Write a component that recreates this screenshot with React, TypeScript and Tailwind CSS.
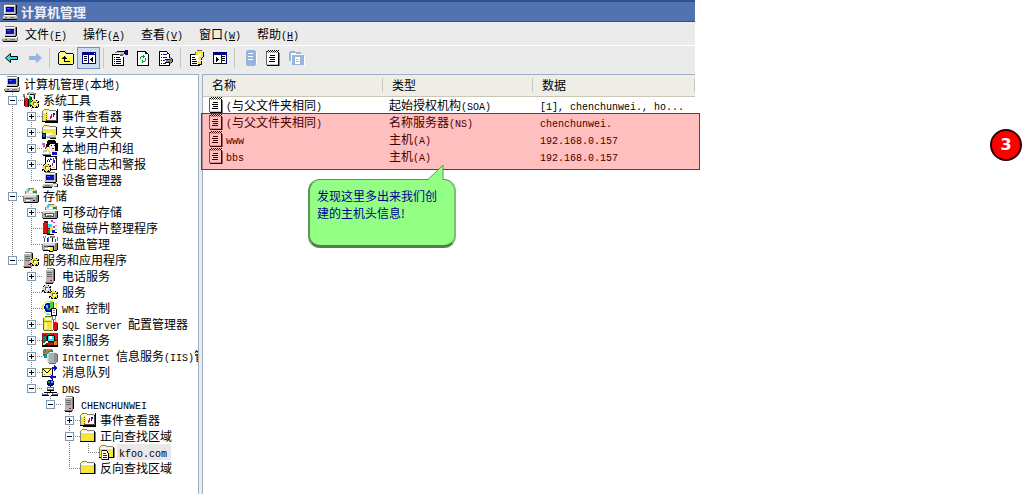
import type { ReactNode } from 'react';

const K = '#000000';
const G = '#808080';
const L = '#c6c6c6';
const W = '#ffffff';
const Y = '#f4e63c';
const N = '#000084';
const B = '#1010c8';
const S = '#96b4dc';
const T = '#008080';
const C = '#22e6e6';
const R = '#e01010';
const E = '#00a020';

// x, y, width, height, fill on a 16x16 grid
type Px = [number, number, number, number, string];

const folder: Px[] = [
  [2, 1, 5, 1, G], [1, 2, 1, 1, G], [2, 2, 5, 1, '#ffffa0'], [0, 3, 1, 10, G], [1, 3, 13, 10, '#ffffa0'],
  [7, 2, 7, 1, G], [1, 5, 13, 8, Y], [1, 4, 13, 1, W], [14, 3, 1, 11, K], [0, 13, 15, 1, K], [15, 4, 1, 10, G],
];

const computer: Px[] = [
  [3, 0, 10, 1, G], [2, 1, 12, 9, L], [2, 1, 11, 1, W], [2, 1, 1, 8, W], [13, 1, 1, 9, G], [14, 1, 1, 9, K], [3, 10, 11, 1, K],
  [4, 3, 8, 5, B], [4, 3, 8, 1, N], [4, 3, 1, 5, N], [5, 4, 3, 1, '#4060ff'],
  [2, 11, 12, 1, W], [1, 12, 14, 2, L], [0, 13, 1, 2, G], [1, 14, 14, 1, '#a0a0a0'], [15, 11, 1, 4, G], [1, 15, 14, 1, K],
  [3, 13, 2, 1, E], [8, 13, 5, 1, G],
];

const server: Px[] = [
  [5, 0, 7, 1, G], [4, 1, 8, 1, W], [3, 2, 8, 12, '#b4b4b4'], [3, 2, 1, 12, W], [11, 1, 1, 13, G], [12, 1, 1, 12, K],
  [5, 4, 5, 1, '#686868'], [5, 6, 5, 1, '#686868'], [5, 8, 5, 1, '#686868'], [8, 12, 2, 1, R], [3, 14, 9, 1, G], [4, 15, 7, 1, K],
];

const note: Px[] = [
  [1, 2, 11, 13, W], [0, 1, 1, 14, '#606060'], [12, 2, 1, 13, K], [13, 3, 1, 13, G], [1, 15, 12, 1, K], [1, 14, 11, 1, L],
  [2, 0, 1, 1, K], [4, 0, 1, 1, K], [6, 0, 1, 1, K], [8, 0, 1, 1, K], [10, 0, 1, 1, K], [12, 0, 1, 1, K],
  [1, 1, 1, 1, K], [3, 1, 1, 1, K], [5, 1, 1, 1, K], [7, 1, 1, 1, K], [9, 1, 1, 1, K], [11, 1, 1, 1, K],
  [2, 2, 1, 1, G], [4, 2, 1, 1, G], [6, 2, 1, 1, G], [8, 2, 1, 1, G], [10, 2, 1, 1, G],
  [4, 5, 5, 1, K], [3, 7, 6, 1, K], [4, 9, 5, 1, K], [3, 11, 6, 1, K],
];

const gear = (x: number, y: number, c: string): Px[] => [
  [x + 2, y + 8, 2, 1, K], [x + 5, y + 8, 3, 1, K], [x + 8, y + 2, 1, 2, K], [x + 8, y + 5, 1, 3, K], [x, y + 6, 1, 2, K],
  [x + 1, y + 1, 7, 7, c], [x + 4, y, 1, 1, c], [x, y + 4, 1, 1, c], [x + 8, y + 4, 1, 1, c], [x + 4, y + 8, 1, 1, c],
  [x + 2, y + 1, 1, 1, K], [x + 6, y + 1, 1, 1, K], [x + 1, y + 2, 1, 1, K], [x + 7, y + 3, 1, 1, K],
  [x + 1, y + 6, 1, 1, K], [x + 2, y + 7, 1, 1, K], [x + 6, y + 7, 1, 1, K],
  [x + 3, y + 3, 3, 1, '#706810'], [x + 3, y + 4, 1, 2, '#706810'], [x + 4, y + 4, 2, 2, W],
];

const drive: Px[] = [
  [3, 6, 11, 1, W], [1, 7, 12, 2, '#d8d8d8'], [0, 8, 1, 6, G], [1, 9, 13, 5, '#b0b0b0'], [13, 7, 2, 7, G], [15, 7, 1, 7, K],
  [1, 14, 14, 1, K], [2, 10, 8, 1, '#505050'], [3, 12, 4, 1, W], [10, 12, 2, 1, K],
];

const disc: Px[] = [
  [5, 0, 6, 1, G], [3, 1, 10, 5, '#d8d8d8'], [4, 1, 3, 3, C], [8, 1, 3, 2, Y], [6, 3, 3, 2, W], [10, 3, 3, 2, E], [2, 3, 1, 3, G], [13, 2, 1, 4, G],
];

const panel: Px[] = [
  [1, 2, 14, 12, N], [2, 5, 12, 8, W], [7, 5, 1, 8, N], [13, 3, 1, 1, W],
];

const icons: Record<string, Px[]> = {
  computer,
  folder,
  server,
  note,
  tools: [
    [5, 0, 6, 2, '#c0c0c0'], [4, 1, 2, 2, G], [6, 2, 6, 1, K], [11, 1, 2, 2, G], [0, 2, 2, 3, G], [1, 4, 1, 4, '#505050'],
    [2, 6, 3, 9, R], [5, 7, 1, 8, K], [1, 8, 1, 6, '#600000'], [3, 4, 1, 2, L], [6, 4, 2, 10, E], [6, 2, 1, 2, L], [8, 5, 1, 9, K], [10, 3, 1, 4, L], [11, 3, 1, 4, K],
    ...gear(7, 7, Y),
  ],
  events: [
    ...folder, [4, 4, 11, 9, '#505050'], [5, 4, 9, 8, W], [4, 4, 2, 1, Y], [4, 6, 2, 1, Y], [4, 8, 2, 1, Y], [4, 10, 2, 1, Y],
    [8, 8, 1, 3, R], [9, 6, 1, 4, R], [11, 5, 1, 4, B], [12, 5, 1, 2, B], [15, 1, 1, 14, K], [3, 14, 13, 1, K],
  ],
  share: [
    ...folder.slice(0, 8), [14, 3, 1, 8, K], [0, 9, 4, 5, N], [1, 10, 2, 3, T], [4, 9, 6, 3, W], [4, 12, 5, 1, L], [7, 11, 7, 2, L],
    [0, 14, 4, 1, K], [5, 13, 9, 1, G], [8, 14, 6, 1, K],
  ],
  users: [
    [5, 1, 9, 3, K], [6, 0, 7, 1, K], [4, 4, 4, 3, K], [8, 4, 5, 6, '#f6f2ee'], [7, 5, 1, 4, '#d8d0cc'], [13, 3, 3, 8, K], [9, 5, 1, 1, K], [12, 5, 1, 1, K],
    [9, 10, 3, 2, '#e8e0dc'], [10, 8, 2, 1, R], [0, 3, 3, 2, '#c060c0'], [1, 5, 2, 2, '#e040a0'], [3, 7, 2, 2, '#806010'], [4, 8, 2, 2, Y], [6, 10, 2, 2, Y], [7, 12, 2, 2, Y],
    [1, 10, 4, 3, L], [2, 12, 5, 2, W], [10, 12, 5, 3, B], [0, 14, 9, 1, G], [1, 15, 8, 1, K],
  ],
  perf: [
    [3, 0, 12, 1, K], [3, 0, 1, 9, K], [14, 0, 1, 14, K], [9, 13, 6, 1, K], [4, 1, 10, 12, W],
    [5, 4, 1, 2, B], [6, 3, 1, 1, B], [7, 4, 1, 2, B], [8, 2, 1, 2, B], [9, 3, 1, 1, B], [10, 7, 1, 3, R], [11, 2, 1, 5, R], [12, 4, 1, 3, B], [13, 1, 1, 2, R],
    ...gear(0, 7, Y), [10, 11, 3, 1, L],
  ],
  devices: [
    ...computer.slice(0, 11), [2, 11, 8, 1, W], [1, 12, 10, 2, L], [3, 13, 5, 1, G], [0, 14, 11, 1, G], [1, 15, 9, 1, K],
    [11, 11, 4, 1, G], [11, 12, 5, 2, '#e8e8e8'], [12, 14, 3, 1, G], [15, 12, 1, 3, K],
  ],
  storage: [...disc, ...drive],
  removable: [...disc.map(([x, y, w, h, c]): Px => [x + 1, y, w, h, c]), ...drive, [3, 9, 9, 4, '#505050'], [4, 10, 7, 2, W], [5, 11, 5, 1, G]],
  defrag: [
    [2, 1, 4, 2, '#800000'], [1, 3, 5, 10, R], [5, 4, 3, 10, '#a00050'], [6, 4, 4, 4, C], [8, 7, 3, 5, Y], [10, 10, 3, 3, B], [6, 9, 2, 4, E],
    [9, 0, 2, 2, '#e020e0'], [11, 2, 2, 1, '#e020e0'], [13, 5, 2, 1, C], [11, 6, 2, 2, '#e020e0'], [13, 9, 2, 1, C], [13, 12, 2, 1, K],
    [1, 13, 5, 1, '#600000'], [5, 14, 7, 1, K],
  ],
  diskmgmt: [
    [1, 0, 1, 2, G], [3, 0, 1, 2, G], [2, 2, 1, 4, '#505050'], [5, 2, 1, 4, B], [6, 1, 1, 5, '#6060ff'], [8, 0, 5, 2, G], [10, 2, 1, 5, K], [13, 3, 1, 4, R],
    [15, 1, 1, 4, G], ...drive, [6, 10, 6, 1, K], [6, 11, 5, 3, W], [8, 11, 3, 4, Y], [7, 15, 4, 1, K], [11, 11, 1, 4, K],
  ],
  services: [...gear(0, 0, '#d8d8d8'), ...gear(7, 6, Y)],
  apps: [...server.map(([x, y, w, h, c]): Px => [x - 3, y, w, h, c]), ...gear(7, 5, Y)],
  wmi: [
    [2, 2, 2, 1, Y], [4, 1, 4, 1, Y], [0, 5, 1, 5, Y], [1, 4, 1, 2, Y], [2, 11, 2, 2, Y], [4, 13, 3, 1, Y], [13, 3, 2, 2, Y], [14, 5, 1, 3, Y],
    [4, 3, 5, 1, B], [3, 4, 6, 7, B], [4, 5, 2, 3, C], [5, 8, 3, 2, E], [2, 6, 1, 3, N], [4, 11, 5, 1, N],
    [8, 1, 3, 8, '#40d820'], [9, 0, 2, 2, '#a0ff40'], [11, 2, 1, 6, '#006010'], [9, 8, 5, 1, K], [9, 8, 1, 8, K], [14, 9, 1, 7, K], [9, 15, 6, 1, K],
    [10, 9, 4, 6, W], [11, 10, 2, 1, G], [11, 12, 2, 1, G], [4, 14, 4, 1, C],
  ],
  sql: [
    [3, 0, 7, 1, '#706810'], [2, 1, 9, 13, Y], [1, 2, 1, 12, '#706810'], [3, 2, 6, 2, '#ffffc8'], [2, 5, 9, 1, '#a09820'], [3, 7, 2, 6, '#ffffb0'], [2, 14, 9, 1, '#706810'],
    [10, 0, 1, 3, G], [13, 0, 1, 3, G], [10, 3, 3, 1, G], [10, 4, 1, 10, W], [11, 4, 1, 10, '#505050'], [12, 6, 3, 8, R], [13, 3, 1, 3, L], [15, 7, 1, 7, '#600000'], [12, 14, 3, 1, K],
  ],
  index: [
    [0, 1, 16, 14, '#6a2018'], [0, 1, 16, 2, R], [5, 1, 2, 2, E], [1, 4, 3, 8, T], [11, 3, 4, 5, '#c83018'], [12, 9, 3, 4, '#e08018'], [0, 13, 16, 2, K], [6, 11, 5, 2, R],
    [6, 3, 6, 1, K], [5, 4, 8, 5, K], [6, 9, 6, 1, K], [6, 4, 6, 5, C], [7, 4, 3, 3, W], [4, 9, 2, 2, W], [3, 10, 1, 2, W], [1, 11, 2, 2, Y],
  ],
  iis: [
    [2, 1, 8, 7, '#109090'], [1, 2, 10, 6, '#109090'], [4, 1, 5, 2, '#d08030'], [2, 3, 4, 3, '#b07840'], [2, 8, 3, 2, '#109090'],
    [7, 4, 7, 1, '#e8ecee'], [6, 5, 9, 10, '#a8b0b4'], [5, 6, 1, 8, '#d8dcde'], [6, 5, 1, 9, '#c8ced0'], [12, 5, 3, 9, '#8c9498'], [15, 6, 1, 8, '#606a6e'], [7, 15, 7, 1, '#606060'],
  ],
  queue: [
    [0, 4, 11, 1, '#706810'], [0, 4, 1, 9, '#706810'], [0, 12, 11, 1, K], [10, 5, 1, 7, K], [1, 5, 9, 7, '#ffff90'],
    [1, 5, 1, 1, K], [2, 6, 1, 1, K], [3, 7, 1, 1, K], [4, 8, 2, 1, K], [6, 7, 1, 1, K], [7, 6, 1, 1, K], [8, 5, 1, 1, K], [2, 10, 1, 1, G], [8, 10, 1, 1, G],
    [10, 3, 3, 2, B], [12, 1, 1, 6, B], [13, 2, 1, 4, B], [14, 3, 1, 2, B], [11, 12, 3, 2, B], [10, 10, 1, 6, B], [9, 11, 1, 4, B], [8, 12, 1, 2, B],
  ],
  dns: [
    [6, 0, 5, 6, N], [5, 1, 7, 4, N], [6, 1, 2, 2, E], [9, 1, 2, 2, '#80a0ff'], [7, 3, 3, 2, B],
    [8, 6, 1, 2, K], [5, 7, 7, 3, '#6068a0'], [6, 8, 5, 1, W], [5, 10, 7, 1, K], [8, 11, 1, 1, K], [2, 12, 13, 1, K],
    [0, 13, 6, 2, '#6068a0'], [0, 15, 7, 1, K], [10, 13, 6, 2, '#6068a0'], [9, 15, 7, 1, K], [1, 13, 4, 1, W], [11, 13, 4, 1, W],
  ],
  zone: [
    ...folder, [2, 6, 6, 1, K], [2, 6, 1, 10, G], [3, 7, 5, 8, W], [8, 7, 1, 2, K], [8, 9, 1, 6, W], [4, 9, 3, 1, B], [4, 11, 4, 1, B], [4, 13, 4, 1, B], [9, 9, 1, 7, K], [3, 15, 7, 1, K],
  ],
  up: [
    [2, 1, 5, 1, K], [1, 2, 1, 1, K], [7, 2, 1, 1, K], [8, 3, 7, 1, K], [0, 3, 1, 11, K], [15, 4, 1, 10, K], [1, 14, 14, 1, K], [2, 2, 5, 1, '#ffff60'],
    [1, 3, 7, 1, '#ffff60'], [1, 4, 14, 10, '#ffff60'], [1, 4, 14, 1, '#ffffd0'],
    [6, 6, 1, 5, K], [5, 7, 3, 1, K], [4, 8, 5, 1, K], [6, 11, 6, 1, K],
  ],
  tree: [...panel, [3, 6, 3, 1, K], [3, 8, 3, 1, K], [3, 10, 3, 1, K], [9, 9, 1, 1, K], [10, 8, 1, 3, K], [11, 7, 1, 5, K]],
  pane: [...panel.slice(0, 2), [9, 5, 1, 8, N], [10, 6, 3, 1, K], [10, 8, 3, 1, K], [10, 10, 3, 1, K], [4, 7, 1, 5, K], [5, 8, 1, 3, K], [6, 9, 1, 1, K]],
  props: [
    [0, 4, 11, 1, K], [0, 4, 1, 11, K], [11, 7, 1, 8, K], [0, 15, 12, 1, K], [1, 5, 10, 10, W], [2, 7, 1, 1, K], [4, 7, 4, 1, K], [2, 9, 1, 1, K], [4, 9, 5, 1, K], [2, 11, 1, 1, K], [4, 11, 5, 1, K], [2, 13, 1, 1, K], [4, 13, 5, 1, K],
    [3, 2, 4, 1, G], [5, 1, 8, 1, K], [5, 2, 8, 2, L], [4, 3, 4, 1, W], [7, 4, 5, 1, G], [8, 5, 3, 1, '#505050'], [13, 0, 3, 5, N], [12, 1, 1, 3, K],
  ],
  refresh: [
    [2, 1, 9, 1, K], [2, 1, 1, 14, K], [2, 15, 12, 1, K], [13, 4, 1, 12, K], [3, 2, 10, 13, W], [10, 2, 1, 2, K], [11, 2, 1, 1, K], [11, 3, 2, 1, K],
    [6, 6, 4, 1, E], [5, 7, 1, 2, E], [8, 5, 1, 3, E], [7, 11, 3, 1, E], [10, 8, 1, 3, E], [7, 10, 1, 3, E],
  ],
  exportList: [
    [1, 1, 8, 1, K], [1, 1, 1, 14, K], [1, 15, 11, 1, K], [11, 4, 1, 4, K], [11, 13, 1, 3, K], [2, 2, 9, 13, W], [9, 2, 1, 2, K], [10, 3, 1, 1, K],
    [3, 4, 1, 1, K], [5, 4, 4, 1, B], [3, 7, 1, 1, K], [5, 7, 4, 1, B], [3, 10, 1, 1, K], [5, 10, 2, 1, B], [3, 13, 1, 1, K], [5, 13, 3, 1, B],
    [7, 9, 5, 1, K], [7, 12, 5, 1, K], [8, 10, 5, 2, G], [11, 6, 1, 2, K], [12, 7, 1, 7, G], [13, 8, 1, 5, G], [13, 8, 1, 1, K], [13, 12, 1, 1, K], [14, 9, 1, 3, K],
  ],
  help: [
    [1, 4, 6, 1, K], [1, 4, 1, 11, K], [1, 15, 10, 1, K], [10, 12, 1, 4, K], [2, 5, 8, 10, W], [3, 7, 3, 1, K], [3, 9, 4, 1, K], [3, 11, 5, 1, K], [3, 13, 5, 1, K],
    [8, 0, 5, 1, '#706810'], [7, 1, 7, 2, Y], [6, 2, 1, 3, '#706810'], [7, 3, 2, 2, Y], [12, 2, 2, 4, Y], [14, 2, 1, 5, K], [10, 6, 3, 2, Y], [9, 8, 3, 2, Y], [12, 8, 1, 2, K], [13, 7, 1, 1, K], [9, 11, 3, 3, Y], [12, 11, 1, 4, K], [9, 14, 3, 1, K],
  ],
  serverOff: [[4, 0, 8, 1, S], [3, 1, 10, 14, S], [4, 15, 8, 1, S], [5, 3, 5, 1, W], [5, 6, 5, 1, W], [5, 9, 5, 1, W], [13, 2, 1, 13, W]],
  foldersOff: [[1, 1, 5, 1, S], [0, 2, 12, 9, S], [2, 3, 5, 1, W], [3, 5, 12, 10, S], [2, 4, 1, 8, W], [3, 4, 10, 1, W], [6, 7, 5, 7, W], [7, 9, 2, 1, S], [7, 11, 3, 1, S], [15, 6, 1, 10, W]],
};

function Icon({ name }: { name: string }) {
  return (
    <svg width="16" height="16" viewBox="0 0 16 16" shapeRendering="crispEdges" className="shrink-0" aria-hidden="true">
      {icons[name].map(([x, y, w, h, fill], i) => (
        <rect key={i} x={x} y={y} width={w} height={h} fill={fill} />
      ))}
    </svg>
  );
}

function Arrow({ fill, stroke, flip }: { fill: string; stroke: string; flip?: boolean }) {
  return (
    <svg width="16" height="16" viewBox="0 0 16 16" className={flip ? 'rotate-180' : ''} aria-hidden="true">
      <path d="M1.5 8 6.5 3.5V6.5H13.5V9.5H6.5V12.5Z" fill={fill} stroke={stroke} />
    </svg>
  );
}

// Latin runs are half the width of a Chinese character
function Label({ children }: { children: string }) {
  return (
    <>
      {children.split(/([\x20-\x7e]+)/).filter(Boolean).map((part, i) =>
        /^[\x20-\x7e]/.test(part) ? (
          <span key={i} className="font-['Liberation_Mono',monospace] text-[10px] leading-none">{part}</span>
        ) : (
          part
        ),
      )}
    </>
  );
}

const menus = [
  ['文件', 'F'],
  ['操作', 'A'],
  ['查看', 'V'],
  ['窗口', 'W'],
  ['帮助', 'H'],
];

const toolbar: { label: string; icon: ReactNode; active?: boolean }[][] = [
  [
    { label: '后退', icon: <Arrow fill={C} stroke={K} /> },
    { label: '前进', icon: <Arrow fill={S} stroke={S} flip /> },
  ],
  [
    { label: '上一级', icon: <Icon name="up" /> },
    { label: '显示/隐藏控制台树', icon: <Icon name="tree" />, active: true },
  ],
  [
    { label: '属性', icon: <Icon name="props" /> },
    { label: '刷新', icon: <Icon name="refresh" /> },
    { label: '导出列表', icon: <Icon name="exportList" /> },
  ],
  [
    { label: '帮助', icon: <Icon name="help" /> },
    { label: '显示/隐藏窗格', icon: <Icon name="pane" /> },
  ],
  [
    { label: '新建服务器', icon: <Icon name="serverOff" /> },
    { label: '新建记录', icon: <Icon name="note" /> },
    { label: '新建区域', icon: <Icon name="foldersOff" /> },
  ],
];

// guides, one letter per level: | passes through, T branches, L ends, _ is empty
const tree: { guides: string; box?: '+' | '-'; icon: string; text: string; selected?: boolean }[] = [
  { guides: '', icon: 'computer', text: '计算机管理(本地)' },
  { guides: 'T', box: '-', icon: 'tools', text: '系统工具' },
  { guides: '|T', box: '+', icon: 'events', text: '事件查看器' },
  { guides: '|T', box: '+', icon: 'share', text: '共享文件夹' },
  { guides: '|T', box: '+', icon: 'users', text: '本地用户和组' },
  { guides: '|T', box: '+', icon: 'perf', text: '性能日志和警报' },
  { guides: '|L', icon: 'devices', text: '设备管理器' },
  { guides: 'T', box: '-', icon: 'storage', text: '存储' },
  { guides: '|T', box: '+', icon: 'removable', text: '可移动存储' },
  { guides: '|T', icon: 'defrag', text: '磁盘碎片整理程序' },
  { guides: '|L', icon: 'diskmgmt', text: '磁盘管理' },
  { guides: 'L', box: '-', icon: 'apps', text: '服务和应用程序' },
  { guides: '_T', box: '+', icon: 'server', text: '电话服务' },
  { guides: '_T', icon: 'services', text: '服务' },
  { guides: '_T', icon: 'wmi', text: 'WMI 控制' },
  { guides: '_T', box: '+', icon: 'sql', text: 'SQL Server 配置管理器' },
  { guides: '_T', box: '+', icon: 'index', text: '索引服务' },
  { guides: '_T', box: '+', icon: 'iis', text: 'Internet 信息服务(IIS)管理器' },
  { guides: '_T', box: '+', icon: 'queue', text: '消息队列' },
  { guides: '_L', box: '-', icon: 'dns', text: 'DNS' },
  { guides: '__L', box: '-', icon: 'server', text: 'CHENCHUNWEI' },
  { guides: '___T', box: '+', icon: 'events', text: '事件查看器' },
  { guides: '___T', box: '-', icon: 'folder', text: '正向查找区域' },
  { guides: '___|L', icon: 'zone', text: 'kfoo.com', selected: true },
  { guides: '___L', icon: 'folder', text: '反向查找区域' },
];

function Guide({ kind, box }: { kind: string; box?: string }) {
  return (
    <svg width="19" height="16" viewBox="0 0 19 16" shapeRendering="crispEdges" className="shrink-0" aria-hidden="true">
      {kind !== '_' && (
        <path d={kind === 'L' ? 'M8.5 0V8' : 'M8.5 0V16'} stroke="#808080" strokeDasharray="1 1" />
      )}
      {(kind === 'T' || kind === 'L') && <path d="M8 8.5H19" stroke="#808080" strokeDasharray="1 1" />}
      {box && (
        <>
          <rect x="4.5" y="4.5" width="8" height="8" fill="#ffffff" stroke="#7b98b5" />
          <path d={box === '+' ? 'M6 8.5H11M8.5 6V11' : 'M6 8.5H11'} stroke="#000000" />
        </>
      )}
    </svg>
  );
}

const records = [
  ['(与父文件夹相同)', '起始授权机构(SOA)', '[1], chenchunwei., ho...'],
  ['(与父文件夹相同)', '名称服务器(NS)', 'chenchunwei.'],
  ['www', '主机(A)', '192.168.0.157'],
  ['bbs', '主机(A)', '192.168.0.157'],
];

function Tree() {
  return (
    <nav className="w-[199px] shrink-0 overflow-hidden border-t border-r border-[#9db0c4] bg-white pt-px">
      <ul>
        {tree.map((node, i) => (
          <li key={i} className="flex h-4 items-center pl-1">
            {[...node.guides].map((kind, level) => (
              <Guide key={level} kind={kind} box={level === node.guides.length - 1 ? node.box : undefined} />
            ))}
            <Icon name={node.icon} />
            <span className={`ml-0.5 pr-1 pl-0.5 leading-4 ${node.selected ? 'bg-[#e8e8e8]' : ''}`}>
              <Label>{node.text}</Label>
            </span>
          </li>
        ))}
      </ul>
    </nav>
  );
}

function Records() {
  return (
    <section className="relative flex-1 border-t border-l border-[#9db0c4] bg-white">
      <table className="w-full table-fixed border-collapse text-left">
        <colgroup>
          <col className="w-[180px]" />
          <col className="w-[150px]" />
          <col />
        </colgroup>
        <thead>
          <tr className="h-[21px] border-b border-[#cbc7b8] bg-[#eeeee6]">
            {['名称', '类型', '数据'].map((title) => (
              <th key={title} className="p-0 font-normal">
                <div className="border-r border-[#c9c7ba] pl-[9px] leading-[14px]">{title}</div>
              </th>
            ))}
          </tr>
        </thead>
        <tbody>
          {records.map(([name, type, data], i) => (
            <tr key={i} className="h-[17px] leading-[16px]">
              <td className="p-0 pl-[6px]">
                <div className="flex h-4 items-center">
                  <Icon name="note" />
                  <span className="pl-px"><Label>{name}</Label></span>
                </div>
              </td>
              <td className="p-0 pl-[6px]"><Label>{type}</Label></td>
              <td className="p-0 pl-[7px]"><Label>{data}</Label></td>
            </tr>
          ))}
        </tbody>
      </table>

      {/* Highlighted records */}
      <div className="absolute top-[38px] -right-[5px] -left-[2px] h-[57px] border border-[#f00000] bg-[#ff0000]/25" />

      {/* Callout */}
      <div className="absolute top-[104px] left-[105px] w-[148px]">
        <p className="h-[69px] rounded-xl border-t border-r-2 border-b-3 border-l-2 border-t-[#5f8f5a] border-r-[#7cc072] border-b-[#52804c] border-l-[#5f9558] bg-[#93ff84] px-[7px] pt-[7px] leading-[17px] break-all whitespace-normal text-[#000090]">
          发现这里多出来我们创建的主机头信息!
        </p>
        <svg width="20" height="17" viewBox="0 0 20 17" className="absolute -top-[15px] left-[118px]" aria-hidden="true">
          <path d="M2 16 17 1V16" fill="#93ff84" />
          <path d="M1 15.5H2L17 1V15.5H19" fill="none" stroke="#5f8f5a" />
          <path d="M3 15.5H16" stroke="#93ff84" strokeWidth="2" />
        </svg>
      </div>
    </section>
  );
}

export default function App() {
  return (
    <main className="flex min-h-screen bg-white font-['Noto_Sans_CJK_SC',sans-serif] text-xs whitespace-nowrap text-black">
      <div className="flex min-w-0 flex-1 flex-col bg-[#ebebeb]">
        <header className="flex h-[22px] items-center gap-[3px] border-t-2 border-b border-t-[#2d4f95] border-b-[#2d4f95] bg-[#5372b0] pl-0.5">
          <Icon name="computer" />
          <h1 className="text-[13px] font-bold text-[#eceff6]">计算机管理</h1>
        </header>

        <div className="flex h-[24px] items-center border-b border-white pl-0.5">
          <Icon name="computer" />
          {menus.map(([title, key]) => (
            <button key={key} type="button" className="w-[58px] pl-[7px] text-left">
              {title}
              <span className="font-['Liberation_Mono',monospace] text-[10px] leading-none">(<u>{key}</u>)</span>
            </button>
          ))}
        </div>

        <div className="flex h-[28px] items-center pb-1">
          {toolbar.map((group, i) => (
            <div key={i} className="flex items-center">
              {i > 0 && <div className="mr-1 ml-[3px] h-5 w-px bg-[#c8c6b8]" />}
              {group.map((item) => (
                <button
                  key={item.label}
                  type="button"
                  aria-label={item.label}
                  className={`flex h-[22px] w-[23px] items-center justify-center ${item.active ? 'border border-[#6f93c8] bg-[#ced9ec]' : ''}`}
                >
                  {item.icon}
                </button>
              ))}
            </div>
          ))}
        </div>

        <div className="flex flex-1 gap-[3px]">
          <Tree />
          <Records />
        </div>
      </div>

      <aside className="flex w-[329px] shrink-0 items-start justify-end pt-[129px] pr-0.5">
        <span className="flex size-8 items-center justify-center rounded-full border-2 border-[#300000] bg-[#ff0000] font-['DejaVu_Sans',sans-serif] text-base font-bold text-white">
          3
        </span>
      </aside>
    </main>
  );
}
